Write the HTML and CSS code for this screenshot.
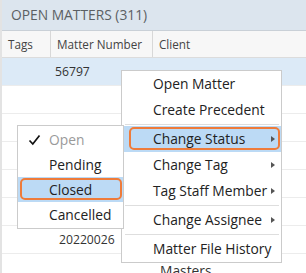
FILE: index.html
```html
<!DOCTYPE html>
<html lang="en">
<head>
  <meta charset="UTF-8">
  <meta name="viewport" content="width=device-width, initial-scale=1.0">
  <title>Open matters</title>
  <link rel="stylesheet" href="styles.css">
</head>
<body>
  <div class="matters">
    <div class="matters__title">OPEN MATTERS (311)</div>
    <div class="matters__head">
      <div class="col col--tags">Tags</div>
      <div class="col col--number">Matter Number</div>
      <div class="col">Client</div>
    </div>
    <div class="matters__rows">
      <div class="row row--selected">
        <div></div>
        <div class="num">56797</div>
        <div></div>
      </div>
      <div class="row"><div></div><div></div><div></div></div>
      <div class="row"><div></div><div></div><div></div></div>
      <div class="row"><div></div><div></div><div></div></div>
      <div class="row"><div></div><div></div><div></div></div>
      <div class="row"><div></div><div></div><div></div></div>
      <div class="row">
        <div></div>
        <div class="num num--wide">20220026</div>
        <div></div>
      </div>
      <div class="row">
        <div></div>
        <div></div>
        <div class="client">Masters</div>
      </div>
    </div>

    <div class="menu menu--main">
      <div class="menu__item">Open Matter</div>
      <div class="menu__item">Create Precedent</div>
      <div class="menu__sep"></div>
      <div class="menu__item menu__item--active menu__item--sub">Change Status</div>
      <div class="menu__item menu__item--sub">Change Tag</div>
      <div class="menu__item menu__item--sub">Tag Staff Member</div>
      <div class="menu__sep"></div>
      <div class="menu__item menu__item--sub">Change Assignee</div>
      <div class="menu__sep"></div>
      <div class="menu__item">Matter File History</div>
    </div>

    <div class="menu menu--status">
      <div class="menu__item menu__item--checked">
        <svg class="check" width="13" height="12" viewBox="0 0 13 12">
          <path d="M1.5 6.5 L4.8 10 L11.5 1.5" fill="none" stroke="#111" stroke-width="1.7"/>
        </svg>
        Open
      </div>
      <div class="menu__item">Pending</div>
      <div class="menu__item menu__item--active">Closed</div>
      <div class="menu__item">Cancelled</div>
    </div>
  </div>
</body>
</html>
```

FILE: styles.css
```css
body {
  margin: 0;
  font-family: "Open Sans", "Noto Sans", sans-serif;
  background-color: #fff;
}

* {
  box-sizing: border-box;
}

.matters {
  position: relative;
  height: 273px;
  overflow: hidden;
  border-left: 2px solid #e3e3e3;
}

.matters__title {
  height: 31px;
  padding-left: 9px;
  line-height: 30px;
  font-size: 13.8px;
  color: #5b5f63;
  background-color: #dce5ee;
  border-bottom: 1px solid #c9d0d7;
}

.matters__head {
  display: grid;
  grid-template-columns: 49px 102px 1fr;
  height: 27px;
  background-color: #f7f7f7;
  border-bottom: 1px solid #dcdcdc;
}

.col {
  padding-left: 6px;
  line-height: 26px;
  font-size: 11.7px;
  color: #444;
}

.col--tags,
.col--number {
  border-right: 1px solid #d8d8d8;
}

.row {
  display: grid;
  grid-template-columns: 49px 102px 1fr;
  height: 28px;
  border-bottom: 1px solid #ececec;
  font-size: 12.2px;
  line-height: 27px;
  color: #333;
}

.row--selected {
  background-color: #dceaf7;
}

.num {
  padding-left: 4px;
}

.num--wide {
  padding-left: 8px;
}

.client {
  padding: 7px 0 0 7px;
  font-size: 13.8px;
  line-height: 20px;
}

.menu {
  position: absolute;
  background-color: #fff;
  border: 1px solid #cbcbcb;
  font-size: 13.8px;
  color: #222;
}

.menu--main {
  left: 119px;
  top: 70px;
  width: 161px;
}

.menu--status {
  left: 15px;
  top: 125px;
  width: 107px;
  padding: 1px 0;
}

.menu__item {
  position: relative;
  height: 26px;
  line-height: 26px;
  padding-left: 31px;
  white-space: nowrap;
}

.menu--status .menu__item {
  height: 25px;
  line-height: 25px;
}

.menu__item--checked {
  color: #9a9a9a;
}

.check {
  position: absolute;
  left: 10px;
  top: 7px;
}

.menu__item--active {
  background-color: #bcdaf5;
}

.menu__item--active::after {
  content: "";
  position: absolute;
  top: 1px;
  bottom: 2px;
  left: 7px;
  right: 1px;
  border: 2px solid #ee7b3a;
  border-radius: 5px;
}

.menu--status .menu__item--active::after {
  left: 2px;
}

.menu__item--sub::before {
  content: "";
  position: absolute;
  right: 6px;
  top: 10px;
  border-left: 4px solid #555;
  border-top: 3.5px solid transparent;
  border-bottom: 3.5px solid transparent;
}

.menu__sep {
  height: 1px;
  margin: 1px 2px 1px 3px;
  background-color: #dedede;
}
```
